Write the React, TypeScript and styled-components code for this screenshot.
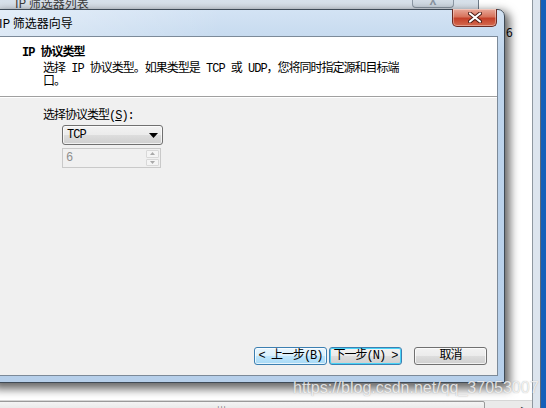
import styled, { createGlobalStyle } from "styled-components";

const SONG = `"Liberation Mono", "Noto Sans CJK SC", monospace`;
const UI = `"Noto Sans CJK SC", "Noto Sans", sans-serif`;

const GlobalStyle = createGlobalStyle`
  html, body { margin: 0; padding: 0; }
  body { width: 546px; height: 408px; overflow: hidden; background: #1d6bc6; }
`;

const Desktop = styled.div`
  position: relative;
  width: 546px;
  height: 408px;
  overflow: hidden;
  background: linear-gradient(to right, #2a78d0, #1560b9);
`;

/* ---------- property window (far back) ---------- */

const PropertyWindow = styled.div`
  position: absolute;
  left: -66px;
  top: -40px;
  width: 607px;
  height: 470px;
  box-sizing: border-box;
  display: flex;
  flex-direction: column;
  background: #dde5ee;
  border-right: 1px solid #5d6b7a;
  padding: 40px 7px 0 8px;
`;

const ListView = styled.div`
  display: flex;
  flex-direction: column;
  background: #fff;
  border-right: 1px solid #8e979f;
`;

const ListRows = styled.div`
  height: 400px;
  padding-top: 25px;
  box-sizing: border-box;
`;

const ListRow = styled.div`
  display: flex;
  height: 14px;
  font: 12px/14px ${UI};
  color: #000;
`;

const ListCell = styled.div<{ $w?: number }>`
  flex: 0 0 ${(p) => (p.$w ? `${p.$w}px` : "auto")};
  padding-left: 6px;
`;

const HScroll = styled.div`
  display: flex;
  height: 17px;
  background: #eaeaea;
  border-top: 1px solid #d6d6d6;
`;

const Thumb = styled.div`
  flex: 0 0 526px;
  display: flex;
  justify-content: center;
  align-items: center;
  box-sizing: border-box;
  border: 1px solid #9a9a9a;
  border-radius: 2px;
  background: linear-gradient(#f4f4f4, #dcdcdc);
  font: 8px/1 ${UI};
  letter-spacing: 1px;
  color: #555;
`;

const Track = styled.div`
  flex: 1;
`;

const ArrowBtn = styled.div`
  flex: 0 0 17px;
  display: flex;
  align-items: center;
  justify-content: center;
  font-size: 8px;
  color: #333;
`;

/* ---------- list dialog (behind the wizard) ---------- */

const ListDialog = styled.div`
  position: absolute;
  left: -12px;
  top: -16px;
  width: 491px;
  height: 300px;
  box-sizing: border-box;
  background: #d3dde8;
  border: 1px solid #6f7c8a;
  border-radius: 6px 6px 0 0;
`;

const BackTitleBar = styled.div`
  display: flex;
  align-items: flex-start;
  height: 25px;
  padding: 0 24px 0 26px;
  background: linear-gradient(#cbd7e3, #dfe7ef);
`;

const BackTitle = styled.div`
  flex: 1;
  padding-top: 11px;
  font: 12px/14px ${UI};
  color: #3a3a3a;
`;

const BackClose = styled.div`
  width: 42px;
  height: 23px;
  display: flex;
  align-items: flex-end;
  justify-content: center;
  padding-bottom: 1px;
  box-sizing: border-box;
  border: 1px solid #8d99a6;
  border-top: 0;
  border-radius: 0 0 4px 4px;
  background: linear-gradient(#dde5ed, #cfd9e3);
  font: bold 11px/1 ${UI};
  color: #8b96a2;
`;

/* ---------- wizard ---------- */

const Wizard = styled.div`
  position: absolute;
  left: -8px;
  top: 9px;
  width: 513px;
  height: 374px;
  box-sizing: border-box;
  display: flex;
  flex-direction: column;
  padding: 0 6px 6px 6px;
  border: 1px solid #3f4b57;
  border-radius: 7px 7px 0 0;
  background: linear-gradient(#d3e3f4 0%, #bfd5ec 12%, #b6cfea 100%);
  box-shadow: 3px 4px 10px 2px rgba(0, 0, 0, 0.6);
`;

const TitleBar = styled.div`
  display: flex;
  align-items: flex-start;
  height: 26px;
  margin: 0 -6px;
  padding: 0 7px 0 6px;
  background: linear-gradient(90deg, rgba(255, 255, 255, 0.4), rgba(255, 255, 255, 0) 45%);
`;

const Title = styled.div`
  flex: 1;
  align-self: center;
  font: 12px/14px ${UI};
  color: #000;
`;

const CloseBtn = styled.div`
  width: 45px;
  height: 18px;
  margin-top: -1px;
  display: flex;
  align-items: center;
  justify-content: center;
  box-sizing: border-box;
  border: 1px solid #6b2a22;
  border-top: 0;
  border-radius: 0 0 5px 5px;
  background: linear-gradient(#e9a99a 0%, #d7745d 45%, #c4412a 55%, #d46a4f 100%);
  box-shadow: inset 0 0 0 1px rgba(255, 255, 255, 0.35);
`;

const Client = styled.div`
  flex: 1;
  display: flex;
  flex-direction: column;
  border: 1px solid #7c8a99;
  background: #f0f0f0;
`;

const Header = styled.div`
  height: 60px;
  box-sizing: border-box;
  padding: 10px 0 0 22px;
  background: #fff;
  border-bottom: 1px solid #a0a0a0;
  font: 12px/13px ${SONG};
  letter-spacing: -1px;
  color: #000;
`;

const HeaderTitle = styled.div`
  font-weight: bold;
`;

const HeaderDesc = styled.div`
  margin: 3px 0 0 21px;
`;

const Body = styled.div`
  flex: 1;
  display: flex;
  flex-direction: column;
  padding: 12px 10px 10px 43px;
  border-top: 1px solid #fff;
  font: 12px/13px ${SONG};
  letter-spacing: -1px;
  color: #000;
`;

const Field = styled.div`
  display: flex;
  flex-direction: column;
  gap: 3px;
  margin: 2px 0 0 19px;
`;

const Combo = styled.div`
  width: 101px;
  height: 20px;
  box-sizing: border-box;
  display: flex;
  align-items: center;
  padding: 0 4px 0 4px;
  border: 1px solid #707070;
  border-radius: 3px;
  background: linear-gradient(#f2f2f2 0%, #ebebeb 50%, #dddddd 51%, #cfcfcf 100%);
  box-shadow: inset 0 0 0 1px rgba(255, 255, 255, 0.7);
`;

const ComboText = styled.span`
  flex: 1;
`;

const Spin = styled.div`
  width: 99px;
  height: 20px;
  box-sizing: border-box;
  display: flex;
  align-items: stretch;
  border: 1px solid #c9c9c9;
  background: #f0f0f0;
  color: #8d8d8d;
`;

const SpinValue = styled.div`
  flex: 1;
  padding: 3px 0 0 3px;
`;

const SpinButtons = styled.div`
  display: flex;
  flex-direction: column;
  gap: 1px;
  width: 13px;
  padding: 1px 1px 1px 0;
`;

const SpinBtn = styled.div`
  flex: 1;
  display: flex;
  align-items: center;
  justify-content: center;
  border: 1px solid #d8d8d8;
  border-radius: 1px;
  background: #f4f4f4;
`;

const ButtonRow = styled.div`
  margin-top: auto;
  display: flex;
  justify-content: flex-end;
`;

const Button = styled.div<{ $variant?: "hover" | "default"; $gap?: number }>`
  width: 73px;
  height: 18px;
  box-sizing: border-box;
  margin-left: ${(p) => p.$gap ?? 0}px;
  display: flex;
  align-items: center;
  justify-content: center;
  border: 1px solid ${(p) => (p.$variant ? "#3c7fb1" : "#707070")};
  border-radius: 3px;
  font: 12px/13px ${SONG};
  letter-spacing: -1px;
  color: #000;
  white-space: pre;
  background: ${(p) =>
    p.$variant === "hover"
      ? "linear-gradient(#eaf6fd 0%, #d9f0fc 50%, #bee6fd 51%, #a7d9f5 100%)"
      : "linear-gradient(#f2f2f2 0%, #ebebeb 50%, #dddddd 51%, #cfcfcf 100%)"};
  box-shadow: ${(p) =>
    p.$variant === "default"
      ? "inset 0 0 0 1px #48d3f7"
      : "inset 0 0 0 1px rgba(255, 255, 255, 0.7)"};
`;

const Watermark = styled.div`
  position: absolute;
  left: 293px;
  top: 379px;
  font: 16px/18px "Liberation Sans", Arial, sans-serif;
  color: rgba(255, 255, 255, 0.8);
  text-shadow: 0 0 1px rgba(90, 90, 90, 0.5);
  white-space: nowrap;
`;

function CloseGlyph() {
  return (
    <svg width="14" height="11" viewBox="0 0 14 11">
      <path
        d="M2 1.5 L12 9.5 M12 1.5 L2 9.5"
        stroke="#4a1b14"
        strokeWidth="4"
        strokeLinecap="round"
      />
      <path
        d="M2 1.5 L12 9.5 M12 1.5 L2 9.5"
        stroke="#fff"
        strokeWidth="2.2"
        strokeLinecap="round"
      />
    </svg>
  );
}

export default function App() {
  return (
    <Desktop>
      <GlobalStyle />
      <PropertyWindow>
        <ListView>
          <ListRows>
            <ListRow>
              <ListCell $w={552} />
              <ListCell>6</ListCell>
            </ListRow>
          </ListRows>
          <HScroll>
            <ArrowBtn>◀</ArrowBtn>
            <Thumb>|||</Thumb>
            <Track />
            <ArrowBtn>▶</ArrowBtn>
          </HScroll>
        </ListView>
      </PropertyWindow>

      <ListDialog>
        <BackTitleBar>
          <BackTitle>IP 筛选器列表</BackTitle>
          <BackClose>X</BackClose>
        </BackTitleBar>
      </ListDialog>

      <Wizard>
        <TitleBar>
          <Title>IP 筛选器向导</Title>
          <CloseBtn>
            <CloseGlyph />
          </CloseBtn>
        </TitleBar>
        <Client>
          <Header>
            <HeaderTitle>IP 协议类型</HeaderTitle>
            <HeaderDesc>
              选择 IP 协议类型。如果类型是 TCP 或 UDP，您将同时指定源和目标端
              <br />口。
            </HeaderDesc>
          </Header>
          <Body>
            <div>
              选择协议类型(<u>S</u>):
            </div>
            <Field>
              <Combo>
                <ComboText>TCP</ComboText>
                <svg width="9" height="5" viewBox="0 0 9 5">
                  <path d="M0 0 H9 L4.5 5 Z" fill="#000" />
                </svg>
              </Combo>
              <Spin>
                <SpinValue>6</SpinValue>
                <SpinButtons>
                  <SpinBtn>
                    <svg width="5" height="3" viewBox="0 0 5 3">
                      <path d="M0 3 H5 L2.5 0 Z" fill="#a8a8a8" />
                    </svg>
                  </SpinBtn>
                  <SpinBtn>
                    <svg width="5" height="3" viewBox="0 0 5 3">
                      <path d="M0 0 H5 L2.5 3 Z" fill="#a8a8a8" />
                    </svg>
                  </SpinBtn>
                </SpinButtons>
              </Spin>
            </Field>
            <ButtonRow>
              <Button $variant="hover">{"< 上一步(B)"}</Button>
              <Button $variant="default" $gap={2}>
                {"下一步(N) >"}
              </Button>
              <Button $gap={12}>取消</Button>
            </ButtonRow>
          </Body>
        </Client>
      </Wizard>

      <Watermark>https://blog.csdn.net/qq_37053007</Watermark>
    </Desktop>
  );
}
